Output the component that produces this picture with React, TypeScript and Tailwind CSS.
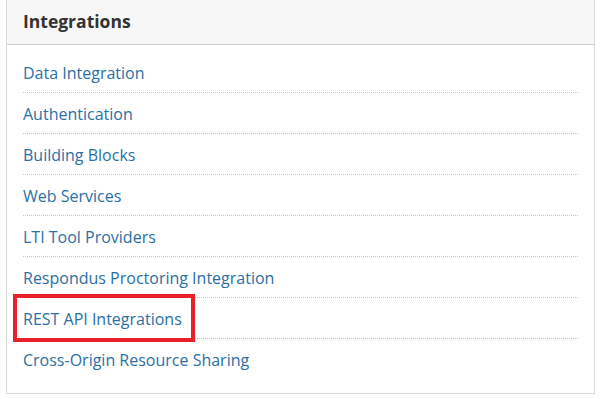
import React from 'react';

const items = [
  'Data Integration',
  'Authentication',
  'Building Blocks',
  'Web Services',
  'LTI Tool Providers',
  'Respondus Proctoring Integration',
  'REST API Integrations',
  'Cross-Origin Resource Sharing',
];

const App: React.FC = () => {
  return (
    <div className="w-[601px] h-[399px] bg-white px-[6px] font-['Open_Sans',sans-serif]">
      <div className="border-x border-b border-[#d9d9d9]">
        {/* Header */}
        <div className="h-[45px] bg-[#f7f7f7] border-b border-[#cccccc] px-4 flex items-center">
          <h2 className="text-[17.5px] font-bold text-[#333333] leading-none">Integrations</h2>
        </div>

        {/* Links */}
        <ul className="px-4 pt-[7px] pb-[13px]">
          {items.map((item, i) => (
            <li
              key={item}
              className={`relative h-[41px] flex items-center pt-[1px] ${
                i < items.length - 1 ? 'border-b border-dotted border-[#c4c4c4]' : ''
              }`}
            >
              <a href="#" className="text-[16px] text-[#2b6fa6] leading-none">
                {item}
              </a>
              {item === 'REST API Integrations' && (
                <span className="absolute left-[-10px] top-[-4px] w-[182px] h-[48px] border-[4px] border-[#e8202a] pointer-events-none" />
              )}
            </li>
          ))}
        </ul>
      </div>
    </div>
  );
};

export default App;
